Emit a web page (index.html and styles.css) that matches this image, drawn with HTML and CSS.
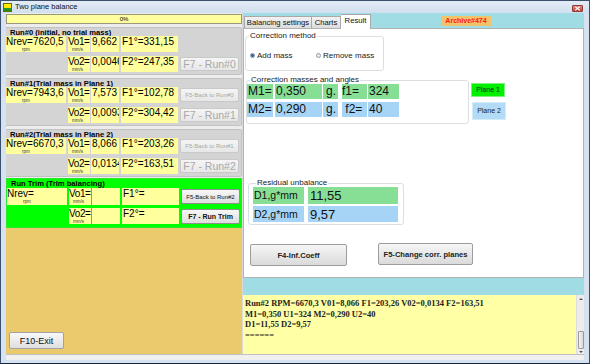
FILE: index.html
```html
<!DOCTYPE html>
<html>
<head>
<meta charset="utf-8">
<title>Two plane balance</title>
<link rel="stylesheet" href="styles.css">
</head>
<body>
<div class="window">
  <div class="titlebar">
    <span class="appicon"></span>
    <span class="wtitle">Two plane balance</span>
    <span class="closebtn"><svg width="7" height="5" viewBox="0 0 7 5"><path d="M1.2 0.6 L5.8 4.4 M5.8 0.6 L1.2 4.4" stroke="#fff" stroke-width="1.2"/></svg></span>
  </div>
  <div class="client">
    <div class="main">
      <div class="left">
        <div class="progress">0%</div>

        <div class="group">
          <div class="ghead">Run#0 (initial, no trial mass)</div>
          <div class="row">
            <div class="cell nrev"><div class="ctext">Nrev=7620,5</div><div class="unit u-rpm">rpm</div></div>
            <div class="cell vl"><div class="ctext">Vo1=</div><div class="unit u-mms">mm/s</div></div>
            <div class="cell vv">9,662</div>
            <div class="cell fv">F1°=331,15</div>
          </div>
          <div class="row">
            <div class="blank"></div>
            <div class="cell vl"><div class="ctext">Vo2=</div><div class="unit u-mms">mm/s</div></div>
            <div class="cell vv">0,0046</div>
            <div class="cell fv">F2°=247,35</div>
            <button class="btn dis big">F7 - Run#0</button>
          </div>
        </div>

        <div class="group">
          <div class="ghead">Run#1(Trial mass in Plane 1)</div>
          <div class="row">
            <div class="cell nrev"><div class="ctext">Nrev=7943,6</div><div class="unit u-rpm">rpm</div></div>
            <div class="cell vl"><div class="ctext">Vo1=</div><div class="unit u-mms">mm/s</div></div>
            <div class="cell vv">7,573</div>
            <div class="cell fv">F1°=102,78</div>
            <button class="btn dis small">F5-Back to Run#0</button>
          </div>
          <div class="row">
            <div class="blank"></div>
            <div class="cell vl"><div class="ctext">Vo2=</div><div class="unit u-mms">mm/s</div></div>
            <div class="cell vv">0,0093</div>
            <div class="cell fv">F2°=304,42</div>
            <button class="btn dis big">F7 - Run#1</button>
          </div>
        </div>

        <div class="group">
          <div class="ghead">Run#2(Trial mass in Plane 2)</div>
          <div class="row">
            <div class="cell nrev"><div class="ctext">Nrev=6670,3</div><div class="unit u-rpm">rpm</div></div>
            <div class="cell vl"><div class="ctext">Vo1=</div><div class="unit u-mms">mm/s</div></div>
            <div class="cell vv">8,066</div>
            <div class="cell fv">F1°=203,26</div>
            <button class="btn dis small">F5-Back to Run#1</button>
          </div>
          <div class="row">
            <div class="blank"></div>
            <div class="cell vl"><div class="ctext">Vo2=</div><div class="unit u-mms">mm/s</div></div>
            <div class="cell vv">0,0134</div>
            <div class="cell fv">F2°=163,51</div>
            <button class="btn dis big">F7 - Run#2</button>
          </div>
        </div>

        <div class="group trim">
          <div class="ghead">Run Trim (Trim balancing)</div>
          <div class="row r1">
            <div class="cell nrev"><div class="ctext">Nrev=</div><div class="unit u-rpm">rpm</div></div>
            <div class="cell vl"><div class="ctext">Vo1=</div><div class="unit u-mms">mm/s</div></div>
            <div class="cell vv"></div>
            <div class="cell fv">F1°=</div>
            <button class="btn en small">F5-Back to Run#2</button>
          </div>
          <div class="row">
            <div class="blank"></div>
            <div class="cell vl"><div class="ctext">Vo2=</div><div class="unit u-mms">mm/s</div></div>
            <div class="cell vv"></div>
            <div class="cell fv">F2°=</div>
            <button class="btn en bold">F7 - Run Trim</button>
          </div>
        </div>

        <div class="tan">
          <button class="exitbtn">F10-Exit</button>
        </div>
      </div>

      <div class="right">
        <div class="tabs">
          <div class="tab t1">Balancing settings</div>
          <div class="tab t2">Charts</div>
          <div class="tab active">Result</div>
          <div class="archive">Archive#474</div>
        </div>
        <div class="panel">
          <div class="gbox method">
            <div class="gtitle">Correction method</div>
            <div class="radios">
              <div class="radio r-add"><span class="rdot on"></span>Add mass</div>
              <div class="radio"><span class="rdot"></span>Remove mass</div>
            </div>
          </div>
          <div class="massrow">
            <div class="gbox masses">
              <div class="gtitle">Correction masses and angles</div>
              <div class="mrow green">
                <div class="mc m-l">M1=</div><div class="mc m-v">0,350</div><div class="mc m-g">g.</div><div class="mc m-fl">f1=</div><div class="mc m-fv">324</div>
              </div>
              <div class="mrow blue">
                <div class="mc m-l">M2=</div><div class="mc m-v">0,290</div><div class="mc m-g">g.</div><div class="mc m-fl">&nbsp;f2=</div><div class="mc m-fv">40</div>
              </div>
            </div>
            <div class="planes">
              <div class="plane p1">Plane 1</div>
              <div class="plane p2">Plane 2</div>
            </div>
          </div>
          <div class="gbox resid">
            <div class="gtitle">Residual unbalance</div>
            <div class="rrow r-a green"><div class="rc r-l">D1,g*mm</div><div class="rc r-v">11,55</div></div>
            <div class="rrow r-b blue"><div class="rc r-l">D2,g*mm</div><div class="rc r-v">9,57</div></div>
          </div>
          <div class="actions">
            <button class="abtn b-f4">F4-Inf.Coeff</button>
            <button class="abtn b-f5">F5-Change corr. planes</button>
          </div>
        </div>
        <div class="memo">
          <div class="memotext">
            <div>Run#2 RPM=6670,3 V01=8,066 F1=203,26 V02=0,0134 F2=163,51</div>
            <div>M1=0,350 U1=324 M2=0,290 U2=40</div>
            <div>D1=11,55 D2=9,57</div>
            <div>======</div>
          </div>
          <div class="vscroll">
            <span class="sarrow up"></span>
            <span class="sfill"></span>
            <span class="sthumb"></span>
            <span class="sarrow dn"></span>
          </div>
        </div>
      </div>
    </div>
    <div class="status"></div>
  </div>
</div>
</body>
</html>
```

FILE: styles.css
```css
html, body {
  margin: 0;
  padding: 0;
}
body {
  width: 590px;
  height: 364px;
  overflow: hidden;
  font-family: "Liberation Sans", Arial, sans-serif;
  color: #000;
}
.window {
  width: 590px;
  height: 364px;
  box-sizing: border-box;
  border: 1px solid #3a4f6c;
  border-bottom-color: #17243a;
  background: #d6e2f0;
  display: flex;
  flex-direction: column;
}
.titlebar {
  height: 12px;
  display: flex;
  align-items: center;
  padding: 0 6px 0 2px;
  background: linear-gradient(#e3ebf5, #d2dfee);
}
.appicon {
  width: 7px;
  height: 7px;
  border: 0.5px solid #6b6b00;
  background: linear-gradient(#fff200 0, #ffe000 55%, #22a022 56%, #1a8a1a 100%);
}
.wtitle {
  margin-left: 3px;
  font-size: 7.5px;
  line-height: 12px;
  color: #111;
}
.closebtn {
  margin-left: auto;
  align-self: flex-start;
  margin-top: 4px;
  width: 11px;
  height: 7px;
  box-sizing: border-box;
  border: 1px solid #8e3a36;
  border-radius: 1px;
  background: linear-gradient(#e08a80, #c4453c);
  display: flex;
  align-items: center;
  justify-content: center;
}
.closebtn svg { display: block; }

.client {
  flex: 1;
  margin: 0 5px 3px 5px;
  display: flex;
  flex-direction: column;
  background: #f0f0f0;
}
.main {
  height: 341px;
  display: flex;
  gap: 1px;
  background: #d9d9d9;
}
.status {
  height: 6px;
  box-sizing: border-box;
  border-top: 1px solid #bfbfbf;
  background: #f0f0f0;
}

/* ---------- left column ---------- */
.left {
  width: 236px;
  display: flex;
  flex-direction: column;
  background: #ececec;
  padding-top: 1px;
}
.progress {
  height: 10px;
  box-sizing: border-box;
  border: 1px solid #9a9a7a;
  background: #ffff9e;
  font-size: 6px;
  line-height: 8px;
  text-align: center;
  margin-bottom: 3px;
}
.group {
  background: #d4d4d4;
  border: 1px solid #c2c2c2;
  border-left: none;
  border-radius: 0 2px 2px 0;
  padding-bottom: 2px;
  margin-bottom: 3px;
}
.ghead {
  height: 8px;
  font-size: 7.6px;
  font-weight: bold;
  line-height: 9px;
  padding-left: 4px;
  white-space: nowrap;
}
.row {
  display: flex;
  gap: 2px;
  height: 16px;
  align-items: stretch;
}
.row + .row { margin-top: 4px; }
.cell {
  background: #ffff9e;
  font-size: 10px;
  line-height: 11px;
  padding-left: 1px;
  overflow: hidden;
  white-space: nowrap;
  box-sizing: border-box;
}
.nrev { width: 60px; padding-left: 0; }
.vl { width: 22px; padding-left: 0; margin-right: -1px; letter-spacing: -0.4px; }
.vv { width: 28px; }
.fv { width: 57px; }
.blank { width: 60px; }
.ctext { height: 11px; }
.unit {
  font-size: 4.5px;
  line-height: 5px;
  color: #333;
  letter-spacing: 0;
}
.u-rpm { padding-left: 16px; }
.u-mms { padding-left: 4px; }

.btn {
  align-self: center;
  width: 59px;
  height: 14px;
  padding: 0;
  box-sizing: border-box;
  border-radius: 2px;
  font-family: "Liberation Sans", Arial, sans-serif;
  white-space: nowrap;
  overflow: hidden;
}
.btn.dis {
  background: linear-gradient(#f5f5f5, #e7e7e7);
  border: 1px solid #c9c9c9;
  color: #a8a8a8;
}
.btn.en {
  background: linear-gradient(#f7f7f7, #dedede);
  border: 1px solid #8f8f8f;
  color: #111;
}
.btn.big { font-size: 10.5px; line-height: 12px; }
.btn.small { font-size: 6px; line-height: 12px; }
.btn.bold { font-size: 7px; font-weight: bold; height: 15px; }

.group.trim {
  background: #00ff00;
  border: 1px solid #2ee52e;
  margin-top: -2px;
  margin-bottom: 0;
  padding-bottom: 3px;
  border-radius: 0;
}
.trim .ghead { height: 9px; line-height: 10px; }
.trim .row.r1 { height: 17px; }
.trim .row + .row { margin-top: 3px; }
.trim .btn.small { height: 15px; }

.tan {
  flex: 1;
  background: #ebca6e;
  display: flex;
  align-items: flex-end;
  padding: 0 0 5px 3px;
}
.exitbtn {
  width: 55px;
  height: 17px;
  padding: 0;
  box-sizing: border-box;
  border: 1px solid #a3a3a3;
  border-radius: 2px;
  background: linear-gradient(#f8f8f8, #dfdfdf);
  font-family: "Liberation Sans", Arial, sans-serif;
  font-size: 9px;
  color: #111;
}

/* ---------- right column ---------- */
.right {
  width: 341px;
  display: flex;
  flex-direction: column;
  background: #a0dce3;
  padding-top: 1px;
}
.tabs {
  height: 14px;
  display: flex;
  align-items: flex-end;
  padding-left: 1px;
}
.tab {
  height: 12px;
  box-sizing: border-box;
  border: 1px solid #a9a9a9;
  border-bottom: none;
  background: linear-gradient(#f3f3f3, #dcdcdc);
  font-size: 7.7px;
  line-height: 12px;
  text-align: center;
  white-space: nowrap;
  color: #111;
}
.t1 { width: 68px; }
.t2 { width: 29px; border-left: none; }
.tab.active {
  width: 30px;
  background: #fff;
  line-height: 12px;
  border-left: none;
  position: relative;
  z-index: 1;
  margin-bottom: -1px;
  height: 15px;
}
.archive {
  align-self: center;
  margin-left: 70px;
  width: 50px;
  height: 10px;
  background: #f1c36a;
  color: #ff1a1a;
  font-size: 7px;
  font-weight: bold;
  line-height: 10px;
  text-align: center;
}
.panel {
  height: 250px;
  box-sizing: border-box;
  border: 1px solid #b2b2b2;
  background: #fff;
  display: flex;
  flex-direction: column;
  align-items: flex-start;
}
.gbox {
  box-sizing: border-box;
  border: 1px solid #d9dfe3;
  border-radius: 3px;
}
.gtitle {
  margin-top: -5px;
  margin-left: 3px;
  padding: 0 1px;
  background: #fff;
  font-size: 8px;
  line-height: 8px;
  color: #222;
  display: table;
  white-space: nowrap;
}
.method {
  margin: 7px 0 0 1px;
  width: 139px;
  height: 35px;
}
.radios {
  display: flex;
  margin-top: 11px;
  padding-left: 4px;
  font-size: 8px;
  line-height: 9px;
  color: #222;
}
.radio {
  display: flex;
  align-items: center;
  white-space: nowrap;
}
.r-add { width: 66px; }
.rdot {
  width: 5px;
  height: 5px;
  box-sizing: border-box;
  border-radius: 50%;
  border: 1px solid #9a9a9a;
  background: #ececec;
  margin-right: 2px;
}
.rdot.on {
  background: radial-gradient(circle, #2f63b8 0 1.3px, #e6e6e6 1.6px);
  border-color: #7f8a99;
}
.massrow {
  display: flex;
  margin: 9px 0 0 2px;
}
.masses {
  width: 223px;
  padding-bottom: 6px;
}
.mrow {
  display: flex;
  height: 15px;
}
.mrow + .mrow { margin-top: 3px; }
.mc {
  font-size: 12px;
  line-height: 14px;
  padding-left: 1px;
  box-sizing: border-box;
  white-space: nowrap;
  color: #111;
}
.green .mc, .green .rc { background: #87df96; }
.blue .mc, .blue .rc { background: #a6d4f6; }
.m-l { width: 26px; }
.m-v { width: 47px; margin-left: 2px; }
.m-g { width: 15px; margin-left: 1px; text-align: center; }
.m-fl { width: 25px; margin-left: 4px; padding-left: 0; }
.m-fv { width: 31px; margin-left: 1px; }
.planes {
  margin-left: 2px;
  display: flex;
  flex-direction: column;
}
.plane {
  width: 34px;
  box-sizing: border-box;
  font-size: 7px;
  text-align: center;
  color: #222;
}
.p1 {
  margin-top: 3px;
  height: 14px;
  line-height: 12px;
  background: #00f000;
  border: 1px solid #7ff07f;
}
.p2 {
  margin-top: 5px;
  margin-left: 1px;
  height: 18px;
  line-height: 16px;
  background: #b3dbf6;
  border: 1px solid #d6ebfa;
}
.resid {
  margin: 59px 0 0 4px;
  width: 156px;
  padding: 0 5px 2px 4px;
}
.rrow { display: flex; }
.r-a { height: 17px; }
.r-b { height: 16px; margin-top: 2px; }
.rc {
  box-sizing: border-box;
  white-space: nowrap;
  color: #111;
}
.r-l { width: 51px; font-size: 10.5px; line-height: 16px; padding-left: 1px; }
.r-v { width: 90px; margin-left: 4px; font-size: 13px; line-height: 17px; padding-left: 2px; }
.actions {
  display: flex;
  align-items: flex-start;
  margin: 18px 0 0 6px;
}
.abtn {
  height: 22px;
  padding: 0;
  box-sizing: border-box;
  border: 1px solid #9c9c9c;
  border-radius: 2px;
  background: linear-gradient(#f6f6f6, #dadada);
  font-family: "Liberation Sans", Arial, sans-serif;
  font-size: 7.6px;
  font-weight: bold;
  color: #222;
  white-space: nowrap;
}
.b-f4 { width: 97px; margin-top: 1px; }
.b-f5 { width: 95px; margin-left: 31px; }

.memo {
  margin-top: 17px;
  height: 59px;
  display: flex;
  background: #ffffa6;
  box-sizing: border-box;
}
.memotext {
  flex: 1;
  padding: 3px 0 0 2px;
  font-family: "Liberation Serif", "Times New Roman", serif;
  font-weight: bold;
  font-size: 8.5px;
  line-height: 10.7px;
  color: #222;
  white-space: nowrap;
}
.vscroll {
  width: 8px;
  display: flex;
  flex-direction: column;
  align-items: center;
  background: #ececec;
  border-left: 1px solid #dcdcdc;
  padding: 3px 0 1px;
  box-sizing: border-box;
}
.sarrow {
  width: 0;
  height: 0;
  border-left: 2px solid transparent;
  border-right: 2px solid transparent;
}
.sarrow.up { border-bottom: 2px solid #555; }
.sarrow.dn { border-top: 2px solid #555; margin-top: 2px; }
.sfill { flex: 1; }
.sthumb {
  width: 6px;
  height: 18px;
  box-sizing: border-box;
  border: 1px solid #9a9a9a;
  border-radius: 1px;
  background: linear-gradient(90deg, #f4f4f4, #d8d8d8);
}
```
